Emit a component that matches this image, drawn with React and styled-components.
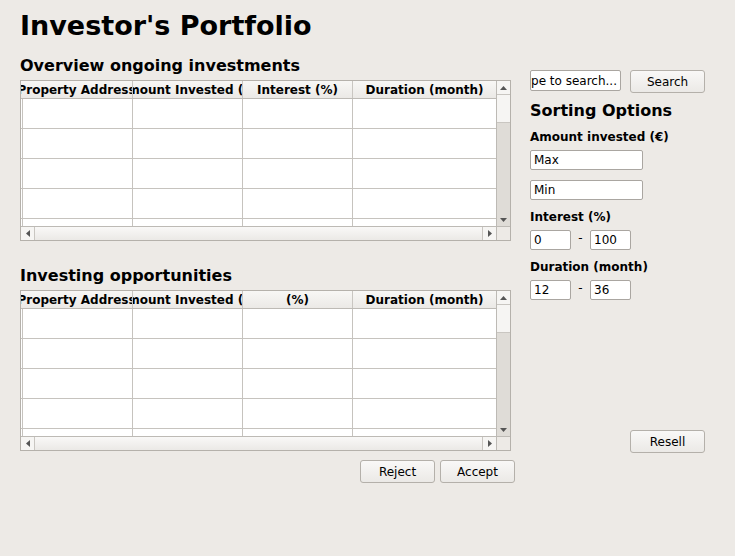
import React from 'react';
import styled, { createGlobalStyle } from 'styled-components';

const GlobalStyle = createGlobalStyle`
    html, body {
        margin: 0;
        padding: 0;
        background: #edeae6;
    }
    body {
        font-family: "DejaVu Sans", "Liberation Sans", sans-serif;
        color: #000;
    }
`;

const Page = styled.div`
    width: 735px;
    height: 556px;
    box-sizing: border-box;
    padding: 10px 0 0 20px;
    background: #edeae6;
`;

const Title = styled.h1`
    margin: 0;
    font-size: 27px;
    line-height: 32px;
    font-weight: bold;
`;

const Main = styled.div`
    display: flex;
    gap: 15px;
    margin-top: 14px;
`;

const Left = styled.div`
    width: 495px;
    display: flex;
    flex-direction: column;
`;

const Right = styled.div`
    width: 175px;
    height: 397px;
    box-sizing: border-box;
    padding-top: 14px;
    display: flex;
    flex-direction: column;
`;

const Heading = styled.h2`
    margin: ${({ top }) => top || 0}px 0 5px 0;
    font-size: 16px;
    line-height: 19px;
    font-weight: bold;
`;

const Frame = styled.div`
    width: 491px;
    height: 161px;
    box-sizing: border-box;
    border: 1px solid #b5b1ab;
    background: #fff;
    display: grid;
    grid-template-columns: 1fr 14px;
    grid-template-rows: 1fr 14px;
`;

const Viewport = styled.div`
    overflow: hidden;
    display: flex;
    flex-direction: column;
`;

const HeaderRow = styled.div`
    display: grid;
    grid-template-columns: 112px 110px 110px 1fr;
    height: 18px;
    flex: none;
    box-sizing: border-box;
    border-bottom: 1px solid #bdbab5;
    background: linear-gradient(#f8f7f5, #ebe9e6);
`;

const HeaderCell = styled.div`
    display: flex;
    justify-content: center;
    align-items: center;
    overflow: clip;
    white-space: nowrap;
    font-size: 12px;
    font-weight: bold;
    border-right: ${({ last }) => (last ? 'none' : '1px solid #c9c6c1')};
`;

const HeaderText = styled.span`
    flex: none;
`;

const BodyRow = styled.div`
    display: grid;
    grid-template-columns: 112px 110px 110px 1fr;
    height: 30px;
    flex: none;
    box-sizing: border-box;
    border-bottom: 1px solid #c6c3be;
`;

const Cell = styled.div`
    border-right: ${({ last }) => (last ? 'none' : '1px solid #c6c3be')};

    &:first-child {
        margin-left: 1px;
        border-left: 1px solid #c6c3be;
    }
`;

const VScroll = styled.div`
    border-left: 1px solid #bdbab5;
    background: #dfdcd7;
    display: flex;
    flex-direction: column;
`;

const HScroll = styled.div`
    grid-column: 1 / 2;
    border-top: 1px solid #bdbab5;
    background: linear-gradient(#f9f8f7, #ebe9e6);
    display: flex;
`;

const Corner = styled.div`
    border-top: 1px solid #bdbab5;
    border-left: 1px solid #bdbab5;
    background: #edeae6;
`;

const ArrowBox = styled.div`
    flex: none;
    width: ${({ horizontal }) => (horizontal ? '13px' : 'auto')};
    height: ${({ horizontal }) => (horizontal ? 'auto' : '13px')};
    display: flex;
    align-items: center;
    justify-content: center;
    background: ${({ plain }) => (plain ? 'transparent' : '#f6f5f3')};
    border-bottom: ${({ sep }) => (sep === 'bottom' ? '1px solid #c9c6c1' : 'none')};
    border-right: ${({ sep }) => (sep === 'right' ? '1px solid #c9c6c1' : 'none')};
    border-left: ${({ sep }) => (sep === 'left' ? '1px solid #c9c6c1' : 'none')};
`;

const Thumb = styled.div`
    height: 27px;
    flex: none;
    background: #f6f5f3;
    border-bottom: 1px solid #c9c6c1;
`;

const Track = styled.div`
    flex: 1;
`;

const Arrow = ({ dir }) => {
    const points = {
        up: '0,4 3.5,0 7,4',
        down: '0,0 7,0 3.5,4',
        left: '4,0 4,7 0,3.5',
        right: '0,0 0,7 4,3.5',
    }[dir];
    const vertical = dir === 'up' || dir === 'down';
    return (
        <svg width={vertical ? 7 : 4} height={vertical ? 4 : 7}>
            <polygon points={points} fill="#555" />
        </svg>
    );
};

const Table = ({ columns }) => (
    <Frame>
        <Viewport>
            <HeaderRow>
                {columns.map((c, i) => (
                    <HeaderCell key={i} last={i === columns.length - 1}>
                        <HeaderText>{c}</HeaderText>
                    </HeaderCell>
                ))}
            </HeaderRow>
            {[0, 1, 2, 3, 4].map((r) => (
                <BodyRow key={r}>
                    {columns.map((c, i) => (
                        <Cell key={i} last={i === columns.length - 1} />
                    ))}
                </BodyRow>
            ))}
        </Viewport>
        <VScroll>
            <ArrowBox sep="bottom"><Arrow dir="up" /></ArrowBox>
            <Thumb />
            <Track />
            <ArrowBox plain><Arrow dir="down" /></ArrowBox>
        </VScroll>
        <HScroll>
            <ArrowBox horizontal sep="right"><Arrow dir="left" /></ArrowBox>
            <Track />
            <ArrowBox horizontal sep="left"><Arrow dir="right" /></ArrowBox>
        </HScroll>
        <Corner />
    </Frame>
);

const Button = styled.button`
    width: 75px;
    height: 23px;
    box-sizing: border-box;
    border: 1px solid #b4b0aa;
    border-radius: 3px;
    background: linear-gradient(#f9f8f7, #ebe9e6);
    font-family: "DejaVu Sans", sans-serif;
    font-size: 12px;
    color: #000;
    padding: 0;
`;

const ButtonRow = styled.div`
    display: flex;
    justify-content: flex-end;
    gap: 5px;
    margin-top: 9px;
`;

const SearchRow = styled.div`
    display: flex;
    align-items: flex-start;
    justify-content: space-between;
`;

const SearchField = styled.div`
    width: 91px;
    height: 21px;
    box-sizing: border-box;
    border: 1px solid #aaa6a1;
    border-radius: 2px;
    background: #fff;
    display: flex;
    justify-content: flex-end;
    align-items: center;
    overflow: clip;
    white-space: nowrap;
    padding-right: 3px;
    font-size: 12px;
`;

const SearchText = styled.span`
    flex: none;
`;

const SubHeading = styled.h3`
    margin: 8px 0 0 0;
    font-size: 16px;
    line-height: 19px;
    font-weight: bold;
`;

const Label = styled.div`
    margin: 10px 0 6px 0;
    font-size: 12px;
    line-height: 14px;
    font-weight: bold;
`;

const Field = styled.div`
    width: ${({ width }) => width}px;
    height: 20px;
    box-sizing: border-box;
    border: 1px solid #aaa6a1;
    border-radius: 2px;
    background: #fff;
    padding-left: 3px;
    display: flex;
    align-items: center;
    font-size: 12px;
    margin-top: ${({ top }) => top || 0}px;
`;

const Range = styled.div`
    display: flex;
    align-items: flex-start;
`;

const Dash = styled.span`
    width: 19px;
    text-align: center;
    font-size: 12px;
    line-height: 16px;
`;

const Resell = styled(Button)`
    margin-top: auto;
    align-self: flex-end;
`;

const columns = ['Property Address', 'Amount Invested (€)', 'Interest (%)', 'Duration (month)'];
const columns2 = ['Property Address', 'Amount Invested (€)', '(%)', 'Duration (month)'];

export default function App() {
    return (
        <Page>
            <GlobalStyle />
            <Title>Investor's Portfolio</Title>
            <Main>
                <Left>
                    <Heading>Overview ongoing investments</Heading>
                    <Table columns={columns} />
                    <Heading top={25}>Investing opportunities</Heading>
                    <Table columns={columns2} />
                    <ButtonRow>
                        <Button>Reject</Button>
                        <Button>Accept</Button>
                    </ButtonRow>
                </Left>
                <Right>
                    <SearchRow>
                        <SearchField><SearchText>Type to search...</SearchText></SearchField>
                        <Button>Search</Button>
                    </SearchRow>
                    <SubHeading>Sorting Options</SubHeading>
                    <Label>Amount invested (€)</Label>
                    <Field width={113}>Max</Field>
                    <Field width={113} top={10}>Min</Field>
                    <Label>Interest (%)</Label>
                    <Range>
                        <Field width={41}>0</Field>
                        <Dash>-</Dash>
                        <Field width={41}>100</Field>
                    </Range>
                    <Label>Duration (month)</Label>
                    <Range>
                        <Field width={41}>12</Field>
                        <Dash>-</Dash>
                        <Field width={41}>36</Field>
                    </Range>
                    <Resell>Resell</Resell>
                </Right>
            </Main>
        </Page>
    );
}
